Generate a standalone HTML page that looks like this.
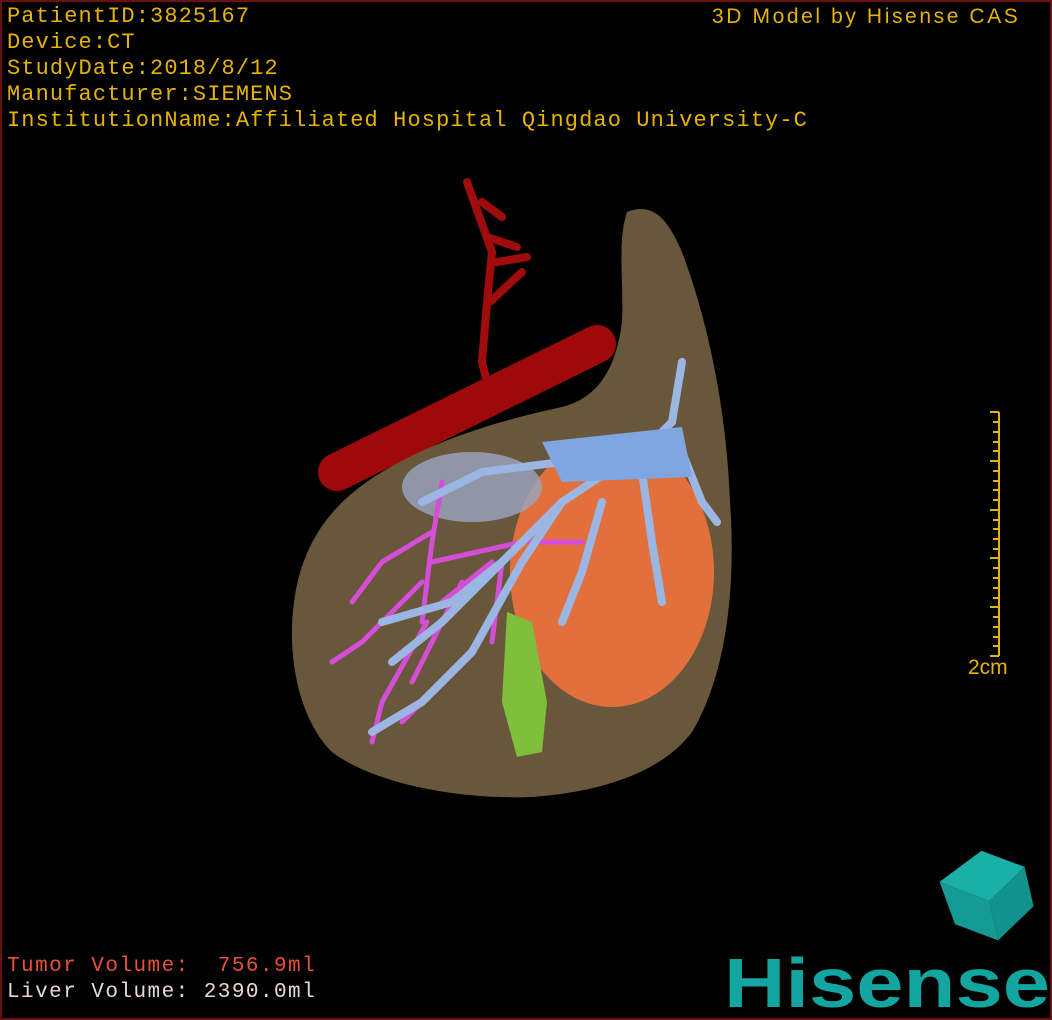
<!DOCTYPE html>
<html><head><meta charset="utf-8"><style>
html,body{margin:0;padding:0;background:#000}
#v{position:relative;width:1048px;height:1016px;border:2px solid #6b0f0f;background:#000;overflow:hidden;font-family:"Liberation Mono","DejaVu Sans Mono",monospace}
.t{position:absolute;color:#e6b400;font-size:22px;line-height:26px;white-space:pre;letter-spacing:1.1px}
.r{color:#e8503a}
</style></head><body><div id="v">
<div class="t" style="left:5px;top:2px">PatientID:3825167
Device:CT
StudyDate:2018/8/12
Manufacturer:SIEMENS
InstitutionName:Affiliated Hospital Qingdao University-C</div>
<div class="t" style="left:710px;top:2px;font-family:'Liberation Sans',sans-serif;font-size:21px;letter-spacing:2.6px">3D Model by Hisense CAS</div>
<div class="t" style="left:966px;top:653px;font-family:'Liberation Sans',sans-serif;font-size:21px;letter-spacing:0">2cm</div>
<div class="t r" style="left:5px;top:952px;font-size:21px;letter-spacing:1.45px">Tumor Volume:  756.9ml</div>
<div class="t" style="left:5px;top:978px;font-size:21px;color:#e8d8d0;letter-spacing:1.45px">Liver Volume: 2390.0ml</div>
<svg width="1048" height="1016" style="position:absolute;left:0;top:0">
<g stroke="#e6b400" stroke-width="2">
<line x1="997" y1="410" x2="997" y2="654"/>
<path d="M988 410h9M991 420h6M991 430h6M991 440h6M991 449h6M988 459h9M991 469h6M991 479h6M991 488h6M991 498h6M988 508h9M991 518h6M991 527h6M991 537h6M991 547h6M988 556h9M991 566h6M991 576h6M991 586h6M991 596h6M988 605h9M991 615h6M991 625h6M991 635h6M991 644h6M988 654h9"/>
</g>
<path d="M465 180 L490 250 L485 300 L480 360 L490 400 M480 200 L500 215 M485 235 L515 245 M495 260 L525 255 M488 300 L520 270" stroke="#a00c0c" stroke-width="8" fill="none" stroke-linecap="round"/>
<line x1="335" y1="470" x2="595" y2="342" stroke="#9e0a0a" stroke-width="38" stroke-linecap="round"/>
<path d="M625 210 C650 200 665 215 680 250 C710 330 725 420 728 500 C735 600 720 680 690 730 C660 770 600 790 530 795 C450 798 370 780 330 750 C295 715 285 650 292 600 C300 540 330 500 380 470 C430 440 490 420 560 405 C600 395 615 360 620 320 C622 280 615 240 625 210 Z" fill="#7b6647" fill-opacity="0.85"/>
<ellipse cx="610" cy="570" rx="102" ry="135" fill="#e2703c"/>
<ellipse cx="470" cy="485" rx="70" ry="35" fill="#9aa6c0" opacity="0.8"/>
<path d="M505 610 L530 620 L545 700 L540 750 L515 755 L500 700 Z" fill="#7fbf3a"/>
<g fill="none" stroke="#d44ed8" stroke-width="5" stroke-linecap="round">
<path d="M440 480 L430 540 L420 620 M430 530 L380 560 L350 600 M420 580 L360 640 L330 660 M425 620 L380 700 L370 740 M460 580 L410 680 M490 560 L440 600 M430 560 L520 540 L580 540 M500 560 L490 640 M470 650 L400 720"/>
</g>
<g fill="none" stroke="#9cb6e4" stroke-width="8" stroke-linecap="round">
<path d="M680 360 L670 420 L640 450 L560 460 L480 470 L420 500"/>
<path d="M620 460 L560 500 L500 560 L440 620 L390 660 M560 500 L520 560 L470 650 L420 700 L370 730 M600 500 L580 570 L560 620 M640 470 L650 540 L660 600 M680 450 L700 500 L715 520 M500 560 L450 600 L380 620 M470 650 L430 690"/>
</g>
<path d="M540 440 L680 425 L690 475 L560 480 Z" fill="#7fa6e0"/>
<g transform="translate(982,885) rotate(-20)">
<polygon points="-40,-20 10,-35 45,-5 0,15" fill="#1ab0a8"/>
<polygon points="-40,-20 0,15 -5,55 -40,25" fill="#159a94"/>
<polygon points="0,15 45,-5 40,35 -5,55" fill="#12928c"/>
</g>
<text x="722" y="1005" font-family="Liberation Sans,sans-serif" font-weight="bold" font-size="70" fill="#13a6a0" textLength="326" lengthAdjust="spacingAndGlyphs">Hisense</text>
</svg>
</div></body></html>
